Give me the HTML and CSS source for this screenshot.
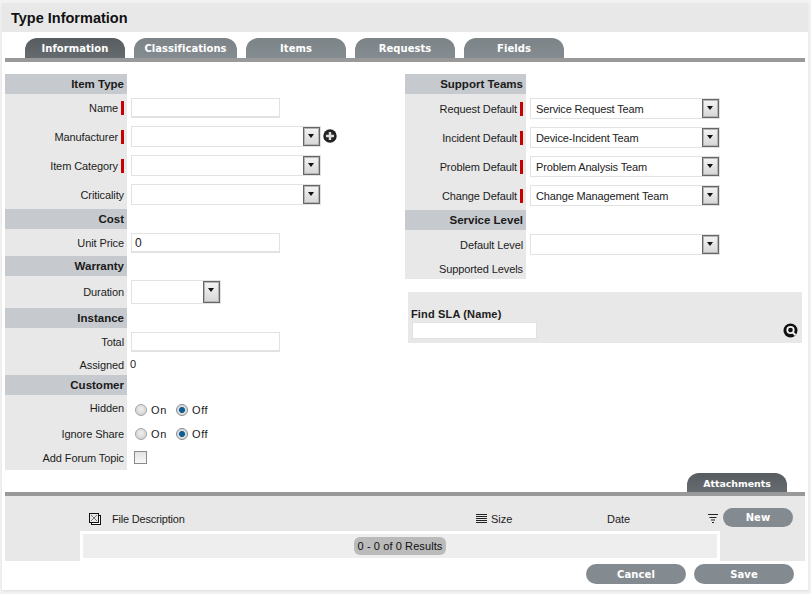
FILE: index.html
```html
<!DOCTYPE html>
<html lang="en">
<head>
<meta charset="utf-8">
<title>Type Information</title>
<link rel="stylesheet" href="styles.css">
</head>
<body>
<main class="card">
  <h1 class="title">Type Information</h1>
  <nav class="tabs">
    <a class="tab active">Information</a>
    <a class="tab wide">Classifications</a>
    <a class="tab">Items</a>
    <a class="tab">Requests</a>
    <a class="tab">Fields</a>
  </nav>
  <div class="columns">
    <section class="form">
      <div class="head">Item Type</div><div class="head-gap"></div>
      <label class="lab req r28">Name</label><div class="val r28"><input class="text" type="text"></div>
      <label class="lab req r29">Manufacturer</label>
      <div class="val r29"><div class="select"><span class="sel-text"></span><span class="arrow"></span></div>
        <svg class="plus" width="14" height="14" viewBox="0 0 15 15"><circle cx="7.5" cy="7.5" r="7.2" fill="#222"/><path d="M7.5 3.2v8.6M3.2 7.5h8.6" stroke="#ddd" stroke-width="2.6"/></svg></div>
      <label class="lab req r29">Item Category</label><div class="val r29"><div class="select"><span class="sel-text"></span><span class="arrow"></span></div></div>
      <label class="lab r29">Criticality</label><div class="val r29"><div class="select"><span class="sel-text"></span><span class="arrow"></span></div></div>
      <div class="head">Cost</div><div class="head-gap"></div>
      <label class="lab r27">Unit Price</label><div class="val r27"><input class="text" type="text" value="0"></div>
      <div class="head">Warranty</div><div class="head-gap"></div>
      <label class="lab r32">Duration</label><div class="val r32"><div class="select short"><span class="sel-text"></span><span class="arrow"></span></div></div>
      <div class="head">Instance</div><div class="head-gap"></div>
      <label class="lab r27">Total</label><div class="val r27"><input class="text" type="text"></div>
      <label class="lab r20">Assigned</label><div class="val r20 plain">0</div>
      <div class="head">Customer</div><div class="head-gap"></div>
      <label class="lab r26">Hidden</label>
      <div class="val r26 radios"><input class="radio" type="radio" name="h"><span class="opt">On</span><input class="radio" type="radio" name="h" checked><span class="opt">Off</span></div>
      <label class="lab r25">Ignore Share</label>
      <div class="val r25 radios"><input class="radio" type="radio" name="i"><span class="opt">On</span><input class="radio" type="radio" name="i" checked><span class="opt">Off</span></div>
      <label class="lab r24">Add Forum Topic</label><div class="val r24"><input class="check" type="checkbox"></div>
    </section>
    <section class="side">
      <div class="form">
        <div class="head">Support Teams</div><div class="head-gap"></div>
        <label class="lab req r29">Request Default</label><div class="val r29"><div class="select"><span class="sel-text">Service Request Team</span><span class="arrow"></span></div></div>
        <label class="lab req r29">Incident Default</label><div class="val r29"><div class="select"><span class="sel-text">Device-Incident Team</span><span class="arrow"></span></div></div>
        <label class="lab req r29">Problem Default</label><div class="val r29"><div class="select"><span class="sel-text">Problem Analysis Team</span><span class="arrow"></span></div></div>
        <label class="lab req r29">Change Default</label><div class="val r29"><div class="select"><span class="sel-text">Change Management Team</span><span class="arrow"></span></div></div>
        <div class="head">Service Level</div><div class="head-gap"></div>
        <label class="lab r29">Default Level</label><div class="val r29"><div class="select"><span class="sel-text"></span><span class="arrow"></span></div></div>
        <label class="lab r20">Supported Levels</label><div class="val r20"></div>
      </div>
      <div class="find">
        <div class="find-field">
          <div class="find-label">Find SLA (Name)</div>
          <input class="find-input" type="text">
        </div>
        <svg class="search" width="16" height="16" viewBox="0 0 16 16"><circle cx="7.5" cy="7.5" r="7" fill="#111"/><circle cx="7.5" cy="7" r="3.2" fill="none" stroke="#f2f2f2" stroke-width="1.8"/><path d="M10 9.6l2.6 2.6" stroke="#f2f2f2" stroke-width="2"/></svg>
      </div>
    </section>
  </div>
  <div class="att-tabs"><a class="tab active">Attachments</a></div>
  <section class="att">
    <div class="att-head">
      <svg class="ic-del" width="12" height="12" viewBox="0 0 12 12"><rect x="2.5" y="2.5" width="9" height="9" fill="#fff" stroke="#111"/><rect x=".5" y=".5" width="9" height="9" fill="#e8e8e8" stroke="#111"/><path d="M2 2l6 6M8 2l-6 6" stroke="#777"/></svg>
      <span class="col-file">File Description</span>
      <svg class="ic-size" width="11" height="9" viewBox="0 0 11 9"><path d="M0 .5h11M0 2.5h11M0 4.5h11M0 6.5h11M0 8.5h11" stroke="#222"/></svg>
      <span class="col-size">Size</span>
      <span class="col-date">Date</span>
      <svg class="ic-filter" width="10" height="10" viewBox="0 0 10 10"><path d="M0 .5h10M1.5 3.5h7M3 6h4M4 8.5h2" stroke="#222" stroke-width="1.1"/></svg>
      <a class="btn new">New</a>
    </div>
    <div class="att-body">
      <div class="results"><span class="badge">0 - 0 of 0 Results</span></div>
    </div>
  </section>
  <footer class="actions">
    <a class="btn action">Cancel</a>
    <a class="btn action">Save</a>
  </footer>
</main>
</body>
</html>
```
FILE: styles.css
```css
* { box-sizing: border-box; }
html, body { margin: 0; padding: 0; }
body {
  width: 811px;
  height: 594px;
  overflow: hidden;
  background: #f2f2f2;
  font-family: "Liberation Sans", Arial, sans-serif;
  font-size: 11px;
  color: #1c1c1c;
  padding: 3px 3px 4px 2px;
}
.card {
  background: #fff;
  width: 806px;
  height: 587px;
  box-shadow: 0 1px 2px #ddd;
  display: flex;
  flex-direction: column;
}
.title {
  margin: 0;
  height: 29px;
  background: #e8e8e8;
  font-size: 14.5px;
  font-weight: bold;
  color: #111;
  line-height: 30px;
  padding-left: 9px;
}
.tabs {
  margin: 6px 3px 0;
  width: 800px;
  height: 24px;
  border-bottom: 4px solid #999;
  display: flex;
  gap: 9px;
  padding-left: 20px;
}
.tab {
  width: 100px;
  height: 20px;
  border-radius: 12px 12px 0 0;
  background: linear-gradient(#7d8488, #858c91);
  color: #fff;
  font-family: "DejaVu Sans", Verdana, sans-serif;
  font-size: 10px;
  font-weight: bold;
  text-align: center;
  line-height: 21px;
  letter-spacing: .05px;
}
.tab.wide { width: 103px; }
.tab.active { background: linear-gradient(#575c60, #666b6f); }
.columns {
  display: flex;
  margin: 12px 0 0 3px;
  height: 396px;
}
.columns > .form { width: 400px; }
.side { width: 400px; display: flex; flex-direction: column; }
.form {
  display: grid;
  grid-template-columns: 122px 1fr;
  align-content: start;
}
.side .form { grid-template-columns: 121px 1fr; }
.head {
  height: 20px;
  background: #c6c9cd;
  font-size: 11.5px;
  font-weight: bold;
  color: #1a1a1a;
  text-align: right;
  padding-right: 3px;
  line-height: 20px;
}
.head-gap { height: 20px; }
.lab {
  background: #e8e8e8;
  text-align: right;
  padding-right: 3px;
  display: flex;
  align-items: center;
  justify-content: flex-end;
  letter-spacing: -.1px;
}
.lab.req::after {
  content: "";
  width: 3px;
  height: 14px;
  background: #c80000;
  margin-left: 3px;
}
.r32 { height: 32px; }
.r29 { height: 29px; }
.r28 { height: 28px; }
.r27 { height: 27px; }
.r26 { height: 26px; }
.r25 { height: 25px; }
.r24 { height: 24px; }
.r20 { height: 20px; }
.val {
  padding-left: 4px;
  padding-top: 4px;
  display: flex;
  align-items: flex-start;
}
.text {
  width: 149px;
  height: 20px;
  border: 1px solid #e2e2e2;
  border-bottom-width: 2px;
  background: #fff;
  font: 12px "Liberation Sans", Arial, sans-serif;
  padding: 0 3px;
  outline: none;
  color: #222;
}
.select {
  width: 190px;
  height: 21px;
  border: 1px solid #e2e2e2;
  background: #fff;
  display: flex;
  justify-content: space-between;
  align-items: stretch;
}
.select.short { width: 90px; height: 24px; }
.sel-text { padding-left: 5px; line-height: 20px; color: #222; letter-spacing: -.15px; }
.arrow {
  width: 17px;
  border: 1px solid #666;
  box-shadow: inset 0 0 0 1px #b4b4b4;
  background: linear-gradient(#f4f4f4, #d6d6d6);
  position: relative;
}
.arrow::after {
  content: "";
  position: absolute;
  left: 4px;
  top: 6px;
  border: 3.5px solid transparent;
  border-top: 4px solid #111;
  border-bottom: 0;
}
.plus { margin: 3px 0 0 2px; }
.plain { padding-left: 3px; padding-top: 3px; }
.radios { padding-left: 8px; padding-top: 9px; }
.r25.radios { padding-top: 7px; }
.radio {
  appearance: none;
  width: 12px;
  height: 12px;
  margin: 0 4px 0 0;
  border: 1px solid #a2a2a2;
  border-radius: 50%;
  background: radial-gradient(circle at 50% 40%, #eee, #ccc);
  flex: none;
}
.radio:checked {
  background: radial-gradient(circle, #0a5f96 0 2.6px, #dcdcdc 3.4px);
  border-color: #8a8a8a;
}
.opt { width: 25px; line-height: 13px; letter-spacing: .6px; }
.check {
  appearance: none;
  width: 13px;
  height: 13px;
  margin: 1px 0 0 3px;
  border: 1px solid #8a8a8a;
  background: linear-gradient(#e2e2e2, #f8f8f8);
}
.find {
  margin: 13px 0 0 3px;
  width: 394px;
  height: 51px;
  background: #e8e8e8;
  display: flex;
  justify-content: space-between;
  align-items: flex-end;
  padding: 0 3px 4px 3px;
}
.find-field { display: flex; flex-direction: column; }
.find-label { font-weight: bold; font-size: 11px; line-height: 14px; margin-bottom: 1px; letter-spacing: .15px; }
.find-input {
  width: 125px;
  height: 17px;
  margin-left: 1px;
  border: 1px solid #e2e2e2;
  background: #fff;
  outline: none;
}
.att-tabs {
  margin: 3px 0 0 3px;
  width: 800px;
  height: 23px;
  border-bottom: 4px solid #999;
  display: flex;
  justify-content: flex-end;
  padding-right: 18px;
}
.att-tabs .tab { height: 19px; line-height: 21px; font-size: 9.4px; letter-spacing: 0; }
.att {
  margin-left: 3px;
  width: 800px;
  height: 65px;
  background: #e8e8e8;
}
.att-head {
  height: 35px;
  display: flex;
  align-items: center;
  padding-top: 10px;
}
.ic-del { margin-left: 84px; }
.col-file { margin-left: 11px; width: 364px; letter-spacing: -.2px; }
.col-size { margin-left: 4px; width: 116px; }
.col-date { width: 101px; }
.btn {
  background: #848b90;
  color: #fff;
  font-family: "DejaVu Sans", Verdana, sans-serif;
  font-size: 10px;
  font-weight: bold;
  text-align: center;
  border-radius: 10px;
  letter-spacing: .1px;
}
.new { width: 70px; height: 19px; line-height: 19px; margin-left: 5px; margin-top: -2px; }
.att-body {
  margin-left: 75px;
  width: 640px;
  height: 30px;
  background: #fff;
  padding: 3px 3px 0;
}
.results {
  height: 24px;
  background: #eee;
  text-align: center;
  padding-top: 3px;
}
.badge {
  display: inline-block;
  height: 18px;
  line-height: 18px;
  padding: 0 4px;
  border-radius: 6px;
  background: #bbb;
  color: #111;
  letter-spacing: .1px;
}
.actions {
  display: flex;
  justify-content: flex-end;
  gap: 8px;
  margin-top: 3px;
  padding-right: 14px;
}
.action { width: 100px; height: 20px; line-height: 21px; }
```
